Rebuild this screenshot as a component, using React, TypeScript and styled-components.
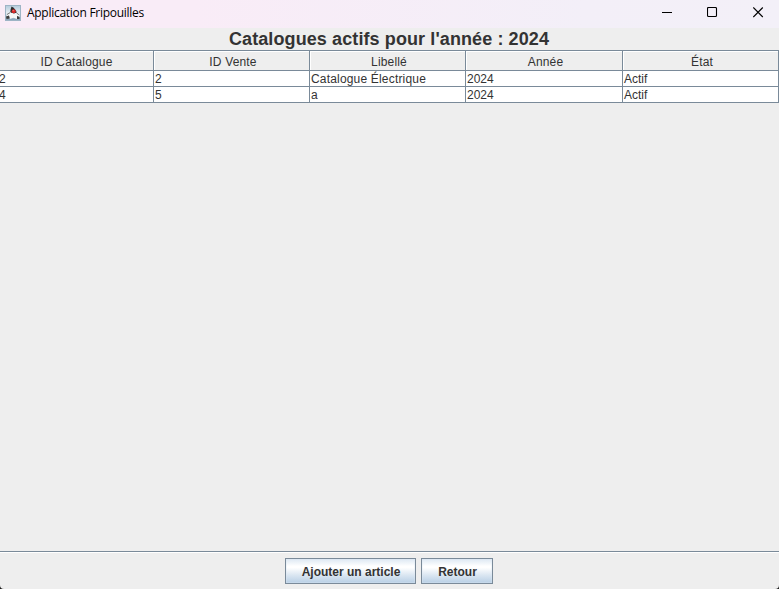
import React from "react";
import styled, { createGlobalStyle } from "styled-components";

const GlobalStyle = createGlobalStyle`
  html, body { margin: 0; padding: 0; overflow: hidden; background: #1c1c1c; }
  * { box-sizing: border-box; }
`;

const steel = "#7a8a99";

const Window = styled.div`
  display: flex;
  flex-direction: column;
  width: 779px;
  height: 589px;
  overflow: hidden;
  background: #eeeeee;
  color: #333333;
  border-radius: 0 0 4px 4px;
  font: 12px "Liberation Sans", Arial, sans-serif;
`;

const TitleBar = styled.header`
  display: flex;
  align-items: center;
  height: 28px;
  flex: none;
  padding: 0 4px 3px 5px;
  background: linear-gradient(90deg, #f9ecf7 0%, #f9ecf7 25%, #f3eff8 75%, #f3f0f8 100%);
`;

const AppTitle = styled.span`
  flex: 1;
  margin-left: 6px;
  font: 12px/16px "Open Sans", "Noto Sans", sans-serif;
  letter-spacing: -0.28px;
  color: #000;
`;

const WindowControls = styled.div`
  display: flex;
  align-items: center;
  gap: 13px;
`;

const ControlButton = styled.button`
  display: flex;
  align-items: center;
  justify-content: center;
  width: 33px;
  height: 24px;
  padding: 0;
  border: 0;
  background: transparent;
`;

const Heading = styled.h1`
  flex: none;
  height: 22px;
  margin: 0;
  padding-right: 1px;
  text-align: center;
  font: bold 18px/22px "Liberation Sans", Arial, sans-serif;
  letter-spacing: 0.1px;
`;

const Content = styled.main`
  flex: 1;
`;

const Table = styled.div`
  border-top: 1px solid ${steel};
`;

const Row = styled.div`
  display: grid;
  grid-template-columns: 154px 156px 156px 157px 156px;
`;

const HeaderCell = styled.div`
  height: 20px;
  padding: 1px 0 0 3px;
  border-right: 1px solid ${steel};
  border-bottom: 1px solid ${steel};
  box-shadow: inset 1px 1px 0 #fff;
  text-align: center;
  line-height: 21px;
  letter-spacing: 0.17px;

  &:first-child { padding-left: 0; box-shadow: inset 0 1px 0 #fff; }
`;

const Cell = styled.div<{ $tracking: number }>`
  height: 16px;
  padding: 1px 0 0 1px;
  border-right: 1px solid ${steel};
  border-bottom: 1px solid ${steel};
  background: #fff;
  line-height: 15px;
  white-space: nowrap;
  letter-spacing: ${(p) => p.$tracking}px;

  &:first-child { padding-left: 0; text-indent: -1px; }
`;

const ActionBar = styled.footer`
  display: flex;
  justify-content: center;
  gap: 5px;
  flex: none;
  height: 38px;
  padding: 6px 1px 0 0;
  border-top: 1px solid ${steel};
  box-shadow: inset 0 1px 0 #fff;
`;

const ActionButton = styled.button<{ $width: number }>`
  width: ${(p) => p.$width}px;
  height: 26px;
  padding: 2px 0 0 1px;
  border: 1px solid ${steel};
  box-shadow: inset 0 0 0 1px rgba(220, 232, 243, 0.35);
  background: linear-gradient(#dde8f3 0%, #ffffff 30%, #ffffff 36%, #dce7f2 66%, #b8cfe5 100%);
  color: #333333;
  font: bold 12px/22px "Liberation Sans", Arial, sans-serif;
`;

const JavaIcon = () => (
  <svg width="16" height="16" viewBox="0 0 16 16">
    <defs>
      <linearGradient id="tile" x1="0" y1="0" x2="0" y2="1">
        <stop offset="0" stopColor="#b3cbdc" />
        <stop offset="0.5" stopColor="#e6edf2" />
        <stop offset="1" stopColor="#7f9db4" />
      </linearGradient>
    </defs>
    <rect x="0.5" y="0.5" width="15" height="15" fill="url(#tile)" stroke="#9db4c5" />
    <path d="M6.500 1.500C5.800 3.500 5.500 5 5.300 7.500L9 8.500l3-.5C10.800 5 9 2.500 6.500 1.500Z" fill="#2b2b2b" />
    <path d="M5.300 7.500 2.500 9 1.500 11.500 4 10.500 4.500 14 8.500 12.800 12 14V10.500L14.500 12 13.500 9 11.500 7.500 9 9Z" fill="#f7f7f7" />
    <path d="M1 11.500 4 10.500 4.800 13.500 1.500 14ZM12 11l2.500 1v2H12Z" fill="#3c3c3c" />
    <path d="M2 9.500 5 7.700M11.800 8l2 2" stroke="#555" strokeWidth="0.800" />
    <circle cx="8.700" cy="6.200" r="2" fill="#d92828" />
    <circle cx="8.200" cy="5.600" r="0.600" fill="#ff8580" />
  </svg>
);

const columns = ["ID Catalogue", "ID Vente", "Libellé", "Année", "État"];
const catalogues = [
  ["2", "2", "Catalogue Électrique", "2024", "Actif"],
  ["4", "5", "a", "2024", "Actif"],
];

export default function App() {
  return (
    <>
      <GlobalStyle />
      <Window>
        <TitleBar>
          <JavaIcon />
          <AppTitle>Application Fripouilles</AppTitle>
          <WindowControls>
            <ControlButton aria-label="Réduire">
              <svg width="11" height="11"><path d="M1 5.500h10" stroke="#000" /></svg>
            </ControlButton>
            <ControlButton aria-label="Agrandir">
              <svg width="11" height="11">
                <rect x="0.500" y="0.500" width="9" height="9" rx="1" fill="none" stroke="#000" strokeWidth="1.100" />
              </svg>
            </ControlButton>
            <ControlButton aria-label="Fermer">
              <svg width="11" height="11"><path d="M0.300 0.500l9.500 9.500M9.800 0.500l-9.500 9.500" stroke="#000" strokeWidth="1.100" /></svg>
            </ControlButton>
          </WindowControls>
        </TitleBar>
        <Heading>Catalogues actifs pour l'année : 2024</Heading>
        <Content>
          <Table>
            <Row>
              {columns.map((name) => <HeaderCell key={name}>{name}</HeaderCell>)}
            </Row>
            {catalogues.map((values) => (
              <Row key={values[0]}>
                {values.map((value, i) => (
                  <Cell key={i} $tracking={i === 2 ? 0.18 : 0}>{value}</Cell>
                ))}
              </Row>
            ))}
          </Table>
        </Content>
        <ActionBar>
          <ActionButton $width={131}>Ajouter un article</ActionButton>
          <ActionButton $width={72}>Retour</ActionButton>
        </ActionBar>
      </Window>
    </>
  );
}
